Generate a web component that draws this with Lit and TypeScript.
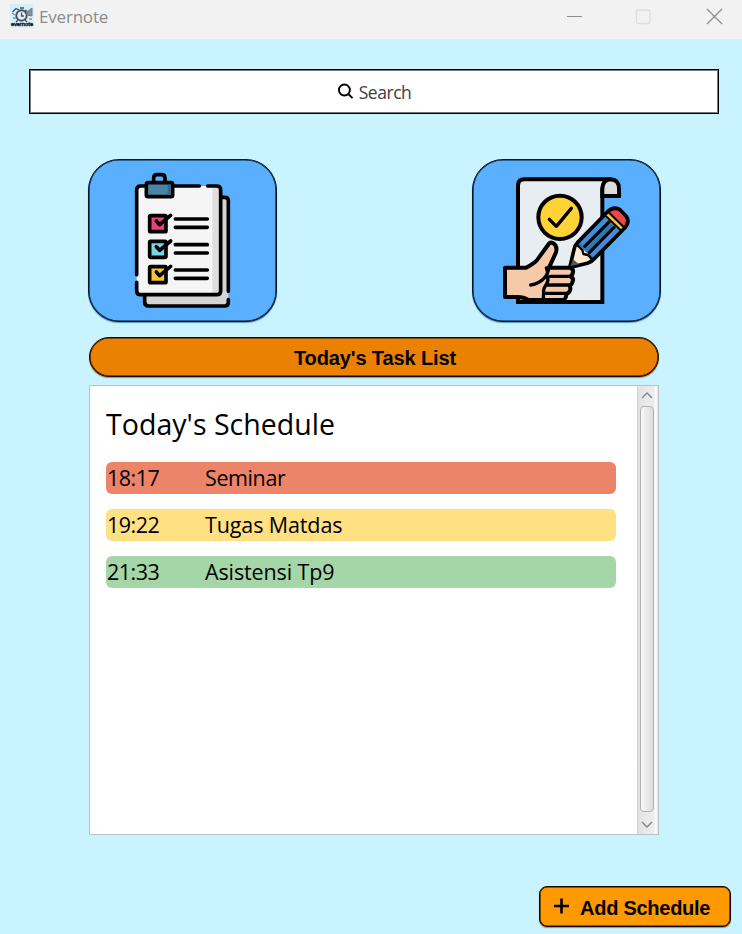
import { LitElement, html, svg, css } from "lit";
import { customElement } from "lit/decorators.js";
import { classMap } from "lit/directives/class-map.js";

const checklist = html`<svg class="art" viewBox="27 30 561 483" fill="none" stroke="#000" stroke-width="11" stroke-linecap="round" stroke-linejoin="round">
  <path d="M194 437V456Q194 468 206 468H434Q445 468 445 457V152Q445 142 434 142H420V437Z" fill="#d4d4d4" stroke="none"/>
  <path d="M182 108H410Q422 108 422 120V422Q422 434 410 434H182Q170 434 170 422V120Q170 108 182 108Z" fill="#f5f5f5" stroke="none"/>
  <path d="M397 113H418V429H397Z" fill="#dedede" stroke="none"/>
  <path d="M194 439V456Q194 468 206 468H434Q445 468 445 457V449M445 424V152Q445 142 434 142H427"/>
  <path d="M170 374V120Q170 108 182 108H195M282 108H358M383 108H410Q422 108 422 120V422Q422 434 410 434H182Q170 434 170 422V397"/>
  <path d="M221 96V84Q221 74 231 74H245Q255 74 255 84V96"/>
  <rect x="199" y="98" width="79" height="42" rx="5" fill="#4985a6"/>
  <path d="M263 104H272V134H263Z" fill="#326984" stroke="none"/>
  ${[["#ec407a", 0], ["#78d5e2", 77], ["#f8c331", 153]].map(([c, y]) => svg`<g transform="translate(0 ${y})">
    <rect x="209" y="197" width="49" height="48" rx="3" fill="${c}"/>
    <path d="M229 213L239 224L272 196"/>
    <path d="M286 207H382M286 232H382"/>
  </g>`)}
</svg>`;

const approve = html`<svg class="art" viewBox="24 30 561 483" fill="none" stroke="#000" stroke-width="12" stroke-linecap="round" stroke-linejoin="round">
  <path d="M159 455V107Q159 88 178 88H438Q412 92 412 120V456H159Z" fill="#e8edf2" stroke-linecap="butt" stroke-linejoin="miter"/>
  <path d="M412 138V115Q414 88 438 88Q462 90 462 116V138Z" fill="#dcdddf" stroke-linejoin="miter"/>
  <circle cx="285" cy="202" r="65" fill="#ffd335"/>
  <path d="M253 208L274 229L319 175" stroke-width="10"/>
  <g>
    <path d="M334 279L422 191L475 240L386 329Z" fill="#2b78b5" stroke="none"/>
    <path d="M341 272L419 194L435 209L356 289Z" fill="#3f8ddd" stroke="none"/>
    <path d="M371 306L452 224L471 242L388 325Z" fill="#3f8ddd" stroke="none"/>
    <path d="M359 289L436 212M373 308L452 227" stroke-width="9"/>
    <path d="M334 279L317 348L367 340L386 329Z" fill="#ffe9d2" stroke="none"/>
    <path d="M418 199L467 246L477 235L430 189Z" fill="#f7c54d" stroke="none"/>
    <path d="M431 188Q446 170 462 181L483 202Q495 215 477 234Z" fill="#eb4747" stroke="none"/>
    <path d="M423 199L467 241M433 189L476 231" stroke-width="6"/>
    <path d="M315 349L327 299Q329 286 338 277L424 189Q444 167 465 179L483 198Q496 214 479 234L390 324Q382 334 367 340L320 351" stroke-width="11"/>
    <path d="M335 283L352 300L355 312L369 315L382 329" stroke-width="7"/>
    <path d="M324 328L342 343L317 348Z" fill="#53585f" stroke="none"/>
  </g>
  <path d="M120 353H183Q208 340 217 329L249 285Q254 275 264 279Q278 287 273 307L252 353H315Q326 358 324 366Q323 376 316 379Q327 384 323 394Q321 404 313 406Q318 412 315 421Q312 430 303 432Q306 441 297 450H190Q174 440 154 441H120Z" fill="#f6caa8"/>
  <path d="M252 350Q249 372 239 383Q222 402 197 405M256 379H316M244 405H313M236 430H302M245 378Q250 364 244 354M247 379Q252 394 243 404M244 405Q234 414 236 430Q233 441 238 450" stroke-width="10"/>
</svg>`;

const logo = html`<svg class="logo" viewBox="0 0 24 24" fill="none" stroke="#46535e" stroke-width="1.3">
  <rect width="24" height="24" fill="#d7effc" stroke="none"/>
  <circle cx="11.5" cy="11.5" r="5.2" fill="#e6eff4" stroke-width="1.9"/>
  <path d="M11.5 8.5V12H14M2.5 8L6 4.5L9 6M10 4H14M15 6L18 8M8 16L6 18M15 16L17 18"/>
  <path d="M17 8L22 4V12L17 11Z" fill="#8192a0" stroke="#71808b" stroke-width="1"/>
  <path d="M2 9L5 11M3 14H6M19 15H22" stroke="#8497a5"/>
  <text x="12" y="22.2" text-anchor="middle" textLength="22" font-family="Liberation Sans" font-weight="bold" font-size="5.6" fill="#101820" stroke="#101820" stroke-width=".3">evernote</text>
</svg>`;

interface Task { time: string; name: string; level: "high" | "medium" | "low"; }

@customElement("app-root")
export class AppRoot extends LitElement {
  private tasks: Task[] = [
    { time: "18:17", name: "Seminar", level: "high" },
    { time: "19:22", name: "Tugas Matdas", level: "medium" },
    { time: "21:33", name: "Asistensi Tp9", level: "low" },
  ];

  static styles = css`
    :host { display: flex; flex-direction: column; height: 934px; width: 742px; overflow: hidden; box-sizing: border-box; background: #c9f3ff; font-family: "Open Sans", "Noto Sans", sans-serif; color: #000; }
    * { box-sizing: border-box; }
    svg { display: block; flex: none; }
    button { padding: 0; color: #000; }
    .titlebar { height: 39px; flex: none; background: #f2f2f2; display: flex; align-items: flex-start; padding: 4px 19px 0 10px; }
    .logo { width: 24px; height: 24px; }
    .title { margin-left: 5px; font-size: 17px; line-height: 25px; letter-spacing: -.2px; color: #8b8b8b; flex: 1; }
    .controls { width: 157px; height: 17px; margin-top: 4px; }
    .search { flex: none; margin: 30px 23px 0 29px; height: 45px; background: #fff; border: 1px solid #000; box-shadow: inset 0 0 0 1px #777; display: flex; align-items: center; justify-content: center; gap: 5px; font-size: 17.5px; letter-spacing: -.45px; color: #404040; }
    .glass { width: 17px; height: 17px; }
    .main { flex: none; width: 572px; margin: 45px 0 0 88px; display: flex; flex-direction: column; }
    .tiles { display: flex; justify-content: space-between; width: 573px; }
    .tile { width: 189px; height: 163px; border: 1px solid #07131f; border-radius: 31px; background: #5aafff; box-shadow: inset 0 0 0 .6px #07131f, 0 1px 1px #5a9bc8; overflow: hidden; }
    .art { width: 187px; height: 161px; }
    .heading, .add { font-family: "Liberation Sans", Arial, sans-serif; font-weight: bold; font-size: 20px; border: 1px solid #140b00; box-shadow: inset 0 0 0 .6px #140b00, 0 1px 1px #b68b55; }
    .heading { height: 40px; width: 570px; margin: 15px 0 0 1px; border-radius: 20px; background: #eb8100; display: flex; align-items: center; justify-content: center; padding: 2px 0 0 2px; letter-spacing: -.12px; }
    .panel { display: flex; width: 570px; height: 450px; margin: 8px 0 0 1px; border: 1px solid #b9c2c6; background: #fff; }
    .content { flex: 1; padding: 20px 21px 0 16px; }
    .caption { font-size: 28.5px; line-height: 36px; letter-spacing: .04px; white-space: nowrap; margin-bottom: 20px; }
    .rows { display: flex; flex-direction: column; gap: 15px; }
    .row { height: 32px; border-radius: 6px; display: flex; align-items: center; font-size: 21.5px; line-height: 32px; letter-spacing: -.12px; }
    .high span + span { letter-spacing: -.4px; }
    .time { width: 99px; padding-left: 1px; letter-spacing: -.5px; }
    .high { background: #eb8468; }
    .medium { background: #ffe083; }
    .low { background: #a5d6a7; }
    .scroll { width: 21px; flex: none; border-left: 1px solid #d2d2d2; background: linear-gradient(90deg, #e2e2e2, #eeeeee 80%, #fff 90%, #e2e2e2); display: flex; flex-direction: column; align-items: flex-start; padding-left: 2px; }
    .arrow { width: 14px; height: 20px; }
    .thumb { width: 14px; flex: 1; margin-bottom: 2px; border: 1px solid #b1b1b1; border-radius: 4px; background: linear-gradient(90deg, #fafafa, #ececec 40%, #dcdcdc); }
    .add { width: 192px; height: 41px; margin: 51px 0 0 539px; border-radius: 8px; background: #ff9900; display: flex; align-items: center; padding: 3px 0 0 14px; gap: 11px; letter-spacing: -.26px; flex: none; }
    .plus { width: 15px; height: 16px; margin-top: -4px; }
  `;

  render() {
    return html`
      <header class="titlebar">
        ${logo}
        <span class="title">Evernote</span>
        <svg class="controls" viewBox="0 0 157 17" fill="none">
          <path d="M1 8.5H16" stroke="#8d8d8d"/>
          <rect x="70.5" y="2" width="13.5" height="13.5" rx="1.5" stroke="#dedede" stroke-width="1.3"/>
          <path d="M141 1L156 16M156 1L141 16" stroke="#8d8d8d" stroke-width="1.3"/>
        </svg>
      </header>
      <div class="search">
        <svg class="glass" viewBox="0 0 17 17" fill="none" stroke="#000" stroke-width="1.9"><circle cx="7.4" cy="7" r="5.5"/><path d="M11.3 11L15.5 15.2"/></svg>
        <span>Search</span>
      </div>
      <main class="main">
        <div class="tiles">
          <button class="tile" aria-label="Checklist">${checklist}</button>
          <button class="tile" aria-label="Approve">${approve}</button>
        </div>
        <div class="heading">Today's Task List</div>
        <section class="panel">
          <div class="content">
            <div class="caption">Today's Schedule</div>
            <div class="rows">
              ${this.tasks.map((t) => html`<div class=${classMap({ row: true, [t.level]: true })}><span class="time">${t.time}</span><span>${t.name}</span></div>`)}
            </div>
          </div>
          <div class="scroll">
            <svg class="arrow" viewBox="0 0 14 20" fill="none" stroke="#858585" stroke-width="1.4"><path d="M2 12L7 7L12 12"/></svg>
            <div class="thumb"></div>
            <svg class="arrow" viewBox="0 0 14 20" fill="none" stroke="#858585" stroke-width="1.4"><path d="M2 8L7 13L12 8"/></svg>
          </div>
        </section>
      </main>
      <button class="add">
        <svg class="plus" viewBox="0 0 15 16" stroke="#000" stroke-width="2.6"><path d="M0 8H15M7.5 .5V15.5"/></svg>
        <span>Add Schedule</span>
      </button>
    `;
  }
}
